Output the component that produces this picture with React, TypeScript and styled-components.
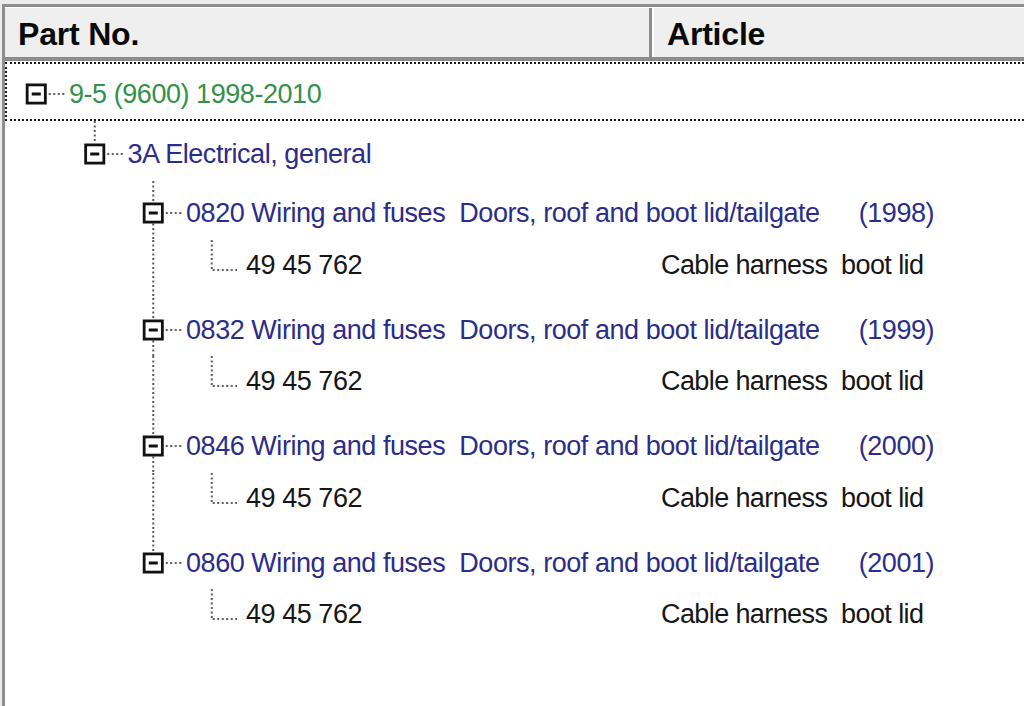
import React from "react";
import styled, { createGlobalStyle } from "styled-components";

const INDENT = 58.5;
const COL2_X = 652;
const ROW_LEFT = 7;

const GlobalStyle = createGlobalStyle`
  html, body { margin: 0; padding: 0; background: #ececec; }
  body {
    width: 1024px;
    height: 706px;
    overflow: hidden;
    font-family: "Liberation Sans", Arial, sans-serif;
  }
`;

const Frame = styled.div`
  box-sizing: border-box;
  width: 1024px;
  height: 706px;
  padding: 4px 0 0 2px;
  background: #ececec;
`;

const Panel = styled.div`
  box-sizing: border-box;
  height: 100%;
  border-top: 3px solid #8e8e8e;
  border-left: 3px solid #8e8e8e;
  background: #ffffff;
  overflow: hidden;
  display: flex;
  flex-direction: column;
`;

const Header = styled.div`
  display: grid;
  grid-template-columns: ${COL2_X - 5}px 1fr;
  height: 49px;
  border-top: 1px solid #ffffff;
  border-bottom: 4px solid #8b8b8b;
  background: #efefef;
`;

const HeaderCell = styled.div<{ $first?: boolean }>`
  box-sizing: border-box;
  padding: 4px 0 0 13px;
  line-height: 45px;
  font-size: 32px;
  font-weight: bold;
  letter-spacing: -0.2px;
  color: #0a0a0a;
  ${(p) =>
    p.$first
      ? "border-right: 3px solid #8b8b8b;"
      : "border-left: 2px solid #ffffff;"}
`;

const Body = styled.div`
  padding-top: 1px;
  margin-right: -20px;
  flex: 1;
`;

const Row = styled.div<{ $h: number; $focus?: boolean }>`
  display: flex;
  align-items: flex-start;
  height: ${(p) => p.$h}px;
  padding-left: ${(p) => (p.$focus ? 0 : 2)}px;
  ${(p) => (p.$focus ? "border: 2px dotted #1c1c1c;" : "")}
`;

const textStyle = `
  line-height: 30px;
  font-size: 27px;
  letter-spacing: -0.45px;
  white-space: pre;
`;

const Label = styled.div<{ $cy: number; $color: string }>`
  ${textStyle}
  padding: ${(p) => p.$cy - 15}px 0 0 3.5px;
  color: ${(p) => p.$color};
`;

const Year = styled.span`
  margin-left: 39px;
`;

const PartCell = styled.div<{ $cy: number; $w: number }>`
  ${textStyle}
  box-sizing: border-box;
  flex: 0 0 ${(p) => p.$w}px;
  padding: ${(p) => p.$cy - 15}px 0 0 5px;
  color: #161616;
`;

const ArticleCell = styled.div<{ $cy: number }>`
  ${textStyle}
  padding: ${(p) => p.$cy - 15}px 0 0 9px;
  color: #161616;
  letter-spacing: -0.6px;
`;

const LinesSvg = styled.svg`
  flex: 0 0 auto;
  display: block;
`;

type LinesProps = {
  level: number;
  h: number;
  lineY: number;
  box: boolean;
  fromTop: boolean;
  toBottom: boolean;
  cont: number[];
};

const DOT = "#5e5e5e";

function TreeLines({ level, h, lineY, box, fromTop, toBottom, cont }: LinesProps) {
  const w = (level + 1) * INDENT;
  const cx = level * INDENT + INDENT / 2;
  const dash = "2 2.5";
  const half = 10.5;
  return (
    <LinesSvg width={w} height={h} viewBox={`0 0 ${w} ${h}`}>
      {cont.map((l) => (
        <line
          key={l}
          x1={l * INDENT + INDENT / 2}
          x2={l * INDENT + INDENT / 2}
          y1={0}
          y2={h}
          stroke={DOT}
          strokeWidth={2}
          strokeDasharray={dash}
        />
      ))}
      {fromTop && (
        <line
          x1={cx}
          x2={cx}
          y1={0}
          y2={box ? lineY - half : lineY}
          stroke={DOT}
          strokeWidth={2}
          strokeDasharray={dash}
        />
      )}
      {toBottom && (
        <line
          x1={cx}
          x2={cx}
          y1={lineY + half}
          y2={h}
          stroke={DOT}
          strokeWidth={2}
          strokeDasharray={dash}
        />
      )}
      <line
        x1={box ? cx + half + 2 : cx + 1}
        x2={box ? w - 0.5 : w - 4}
        y1={lineY}
        y2={lineY}
        stroke={DOT}
        strokeWidth={2}
        strokeDasharray={dash}
      />
      {box && (
        <g>
          <rect
            x={cx - half + 1.4}
            y={lineY - half + 1.4}
            width={2 * half - 2.8}
            height={2 * half - 2.8}
            fill="#ffffff"
            stroke="#111111"
            strokeWidth={2.8}
          />
          <rect x={cx - 4.5} y={lineY - 1.5} width={9} height={3} fill="#111111" />
        </g>
      )}
    </LinesSvg>
  );
}

type RowData =
  | {
      kind: "node";
      level: number;
      text: string;
      year?: string;
      h: number;
      cy: number;
      color: string;
      focus?: boolean;
      fromTop: boolean;
      toBottom: boolean;
      cont: number[];
    }
  | {
      kind: "leaf";
      level: number;
      part: string;
      article: string;
      h: number;
      cy: number;
      cont: number[];
    };

const GREEN = "#33914a";
const BLUE = "#2c2c8a";

const groups = [
  { code: "0820", year: "(1998)" },
  { code: "0832", year: "(1999)" },
  { code: "0846", year: "(2000)" },
  { code: "0860", year: "(2001)" },
];

const rows: RowData[] = [
  {
    kind: "node",
    level: 0,
    text: "9-5 (9600) 1998-2010",
    h: 55,
    cy: 30,
    color: GREEN,
    focus: true,
    fromTop: false,
    toBottom: false,
    cont: [],
  },
  {
    kind: "node",
    level: 1,
    text: "3A Electrical, general",
    h: 60,
    cy: 33,
    color: BLUE,
    fromTop: true,
    toBottom: false,
    cont: [],
  },
];

groups.forEach((g, i) => {
  const hasNext = i < groups.length - 1;
  rows.push({
    kind: "node",
    level: 2,
    text: `${g.code} Wiring and fuses  Doors, roof and boot lid/tailgate`,
    year: g.year,
    h: 58.5,
    cy: 32,
    color: BLUE,
    fromTop: true,
    toBottom: hasNext,
    cont: [],
  });
  rows.push({
    kind: "leaf",
    level: 3,
    part: "49 45 762",
    article: "Cable harness  boot lid",
    h: 58,
    cy: 25,
    cont: hasNext ? [2] : [],
  });
});

export default function App() {
  return (
    <>
      <GlobalStyle />
      <Frame>
        <Panel>
          <Header>
            <HeaderCell $first>Part No.</HeaderCell>
            <HeaderCell>Article</HeaderCell>
          </Header>
          <Body>
            {rows.map((r, i) =>
              r.kind === "node" ? (
                <Row key={i} $h={r.h} $focus={r.focus}>
                  <TreeLines
                    level={r.level}
                    h={r.h}
                    lineY={r.cy}
                    box
                    fromTop={r.fromTop}
                    toBottom={r.toBottom}
                    cont={r.cont}
                  />
                  <Label $cy={r.cy} $color={r.color}>
                    {r.text}
                    {r.year && <Year>{r.year}</Year>}
                  </Label>
                </Row>
              ) : (
                <Row key={i} $h={r.h}>
                  <TreeLines
                    level={r.level}
                    h={r.h}
                    lineY={r.cy + 5}
                    box={false}
                    fromTop
                    toBottom={false}
                    cont={r.cont}
                  />
                  <PartCell $cy={r.cy} $w={COL2_X - ROW_LEFT - (r.level + 1) * INDENT}>
                    {r.part}
                  </PartCell>
                  <ArticleCell $cy={r.cy}>{r.article}</ArticleCell>
                </Row>
              )
            )}
          </Body>
        </Panel>
      </Frame>
    </>
  );
}
